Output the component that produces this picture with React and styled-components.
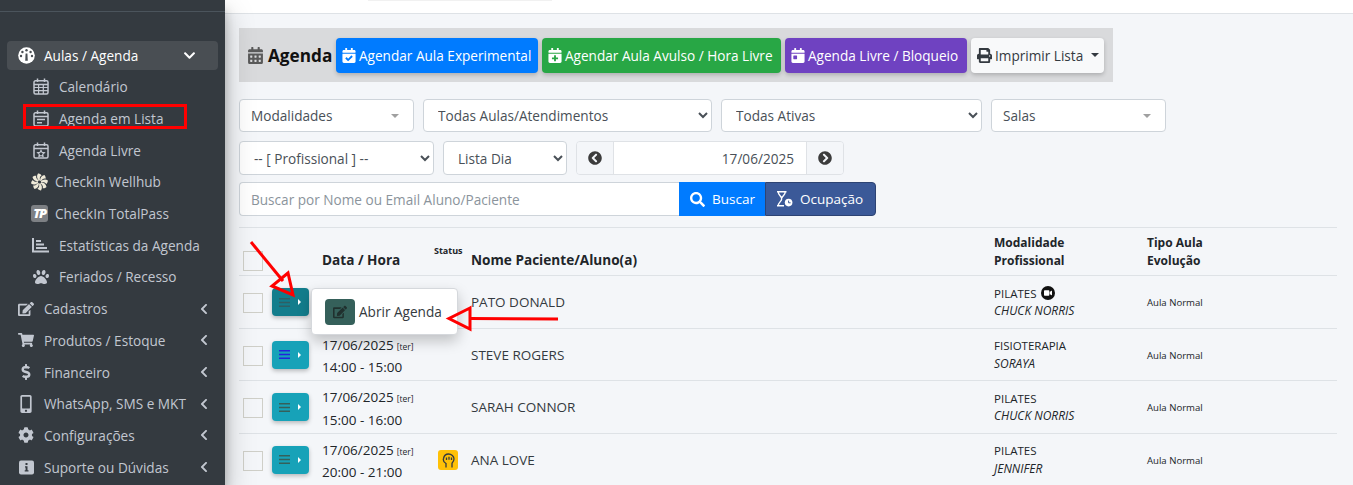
import React from "react";
import styled, { createGlobalStyle } from "styled-components";
import {
  FaChevronDown, FaChevronLeft, FaPaw, FaEdit, FaShoppingCart, FaDollarSign,
  FaMobileAlt, FaCog, FaCalendarAlt, FaCalendarCheck, FaCalendarPlus, FaCalendarDay, FaPrint, FaSearch,
  FaChevronCircleLeft, FaChevronCircleRight, FaVideo,
} from "react-icons/fa";

const Global = createGlobalStyle`
  * { box-sizing: border-box; }
  html, body { margin: 0; height: 100%; overflow: hidden; }
  body { font-family: "Open Sans", "Noto Sans", sans-serif; font-size: 13.6px; color: #212529; background: #f4f6f9; }
  #root { height: 100%; }
`;

const Page = styled.div`display: flex; height: 485px; width: 1353px; position: relative; overflow: hidden;`;

const Sidebar = styled.aside`
  width: 225px; flex: none; background: #343a40; color: #c2c7d0; position: relative; z-index: 2;
  box-shadow: 0 14px 28px rgba(0,0,0,.25), 0 10px 10px rgba(0,0,0,.22);
`;
const Brand = styled.div`height: 12px; border-bottom: 1px solid #4b545c;`;
const Menu = styled.nav`padding-top: 29px; display: flex; flex-direction: column;`;
const Active = styled.div`
  display: flex; align-items: center; height: 29px; width: 211px; margin: 0 7px 1px; padding-left: 10px;
  background: #494e53; border-radius: 4px; color: #fff;
`;
const TopItem = styled.div`display: flex; align-items: center; height: 31.7px; padding-left: 17px;`;
const SubItem = styled.div`display: flex; align-items: center; height: 31.7px; padding-left: ${p => p.$tight ? 31 : 32}px;`;
const TopIcon = styled.span`width: 18px; margin-right: 9px; display: flex; justify-content: center; font-size: 16px; color: #c2c7d0;`;
const ActiveIcon = styled(TopIcon)`color: #fff;`;
const SubIcon = styled.span`width: 17px; margin-right: ${p => p.$tight ? 7 : 10}px; display: flex; justify-content: center; font-size: 16px; color: #c2c7d0;`;
const Chevron = styled.span`margin-left: auto; margin-right: ${p => p.$m}px; display: flex; font-size: ${p => p.$s}px;`;
const TpLogo = styled.span`
  width: 17px; height: 17px; border-radius: 3px; background: #7d8084; color: #fff; font: italic 800 13px/17px "Open Sans", sans-serif;
  letter-spacing: -1.5px; text-align: center;
`;

const Main = styled.main`flex: 1; min-width: 0; display: flex; flex-direction: column;`;
const Header = styled.header`height: 14px; flex: none; background: #fff; border-bottom: 1px solid #dee2e6;`;
const HeaderTab = styled.div`width: 184px; height: 1px; margin-left: 143px; background: #f1f1f1;`;
const Content = styled.div`padding: 14px 16px 0 14px;`;

const Toolbar = styled.div`
  display: flex; align-items: center; gap: 4px; width: 874px; height: 54px; padding-left: 8px; background: #d9dadc;
`;
const Title = styled.h1`
  margin: 0; display: flex; align-items: center; gap: 4px; font-size: 17.2px; font-weight: 700; color: #111; width: 85px; white-space: nowrap;
  svg { color: #5a5a5a; font-size: 17px; flex: none; }
`;
const ActionButton = styled.button`
  height: 35px; width: ${p => p.$w}px; padding: 0 0 0 6px; border: 0; border-radius: 4px; background: ${p => p.$bg}; color: ${p => p.$fg || "#fff"};
  display: flex; align-items: center; gap: 3px; font: inherit; font-size: 13.6px; white-space: nowrap;
  box-shadow: 0 2px 4px rgba(0,0,0,.2);
  svg { font-size: 15px; width: 14px; flex: none; }
`;
const PrintButton = styled(ActionButton)`
  svg { width: 15px; }
`;
const Caret = styled.span`
  width: 0; height: 0; border-left: 4px solid transparent; border-right: 4px solid transparent; border-top: 4px solid ${p => p.$c || "#343a40"};
  margin-left: ${p => p.$ml || 0}px;
`;

const Row = styled.div`display: flex; gap: 9px; margin-top: ${p => p.$mt}px;`;
const Field = styled.select`
  width: ${p => p.$w}px; height: ${p => p.$h || 33}px; padding: 0 0 0 10px; background: #fff; border: 1px solid #ced4da; border-radius: 4px;
  font: inherit; font-size: 13.6px; color: #495057;
`;
const Select2 = styled.div`
  width: ${p => p.$w}px; height: 33px; padding: 0 14px 0 11px; background: #fff; border: 1px solid #ced4da; border-radius: 4px;
  display: flex; align-items: center; justify-content: space-between; color: #495057; font-size: 13.6px;
`;
const DateGroup = styled.div`display: flex; width: 268px; height: 34px; border: 1px solid #dfe2e6; border-radius: 4px; overflow: hidden;`;
const DateAddon = styled.span`width: 36px; flex: none; background: #f4f6f9; display: flex; align-items: center; justify-content: center; color: #3c3c3c; font-size: 14px;`;
const DateValue = styled.div`
  flex: 1; background: #fff; border-left: 1px solid #dfe2e6; border-right: 1px solid #dfe2e6; display: flex; align-items: center; justify-content: flex-end;
  padding-right: 12px; color: #495057; font-size: 13.6px;
`;
const SearchBar = styled.div`display: flex; margin-top: 7px; height: 34px; width: 637px;`;
const SearchInput = styled.input`
  width: 440px; height: 34px; padding: 0 11px; border: 1px solid #ced4da; border-right: 0; border-radius: 4px 0 0 4px; background: #fff; font: inherit; font-size: 13.6px;
  &::placeholder { color: #8b949c; opacity: 1; }
`;
const SearchButton = styled.button`
  width: ${p => p.$w}px; height: 34px; padding: 0 0 0 10px; border: 1px solid ${p => p.$b}; background: ${p => p.$bg}; color: #fff; font: inherit; font-size: 13.5px;
  display: flex; align-items: center; gap: 7px; border-radius: ${p => p.$r || 0};
  svg { font-size: 15px; flex: none; }
`;

const Table = styled.div`margin-top: 11px; width: 1098px; border-top: 1px solid #dee2e6;`;
const columns = "29px 50px 112px 37px 523px 153px 1fr";
const HeadRow = styled.div`
  display: grid; grid-template-columns: ${columns}; padding-left: 4px; height: 48px; border-bottom: 1px solid #dee2e6; font-weight: 700; color: #212529;
`;
const HeadCell = styled.div`align-self: end; padding-bottom: ${p => p.$pb ?? 6}px; line-height: 18px; font-size: ${p => p.$fs || 13.6}px;`;
const StatusHead = styled.div`font-size: 9px; font-weight: 700; margin-top: 17px; white-space: nowrap; line-height: 12px;`;
const DataRow = styled.div`
  display: grid; grid-template-columns: ${columns}; padding-left: 4px; height: ${p => p.$h}px; align-items: center; border-bottom: 1px solid #dee2e6;
`;
const Check = styled.span`display: block; width: 20px; height: 20px; margin-top: 2px; border: 1px solid #cfcfc8; background: #f4f6f9;`;
const HeadCheck = styled(Check)`align-self: end; margin-bottom: 4px;`;
const MenuButton = styled.div`
  width: 37px; height: 28px; border-radius: 4px; background: ${p => p.$bg || "#17a2b8"}; display: flex; align-items: center; padding-left: 7px; gap: 8px;
  box-shadow: 0 2px 4px rgba(0,0,0,.25);
`;
const Arrow = styled.span`width: 0; height: 0; border-top: 3px solid transparent; border-bottom: 3px solid transparent; border-left: 3px solid #fff;`;
const DateCell = styled.div`line-height: 20.5px; padding-top: 3px; font-size: 13.5px; white-space: nowrap;`;
const Weekday = styled.span`font-size: 8.5px; margin-left: 3px;`;
const Status = styled.span`width: 20px; height: 20px; margin: 1px 0 0 4px; border-radius: 3px; background: #ffc107; color: #343a40; display: flex; align-items: center; justify-content: center;`;
const Name = styled.div`font-size: 13.5px; color: #343a40;`;
const ModCell = styled.div`font-size: 11.5px; line-height: 17.5px; color: #212529;`;
const ModLine = styled.div`display: flex; align-items: center; gap: 5px;`;
const Prof = styled.div`font-style: italic; font-size: 12px;`;
const ZoomIcon = styled.span`width: 14px; height: 14px; border-radius: 50%; background: #111; color: #fff; display: flex; align-items: center; justify-content: center; font-size: 8px;`;
const Kind = styled.div`font-size: 9.6px; padding-top: 1px;`;

const Popup = styled.div`
  position: absolute; left: 311px; top: 288px; width: 147px; height: 47px; z-index: 3; background: #fff; border: 1px solid #d5d8dc; border-radius: 4px;
  box-shadow: 0 6px 14px rgba(0,0,0,.22); display: flex; align-items: center; padding-left: 13px; gap: 4px; font-size: 13.6px; color: #343a40;
`;
const PopupIcon = styled.span`width: 30px; height: 26px; margin-top: 1px; border-radius: 4px; background: #35605a; color: #20302e; display: flex; align-items: center; justify-content: center; font-size: 14px;`;
const RedBox = styled.div`position: absolute; left: 23px; top: 104px; width: 164px; height: 25px; z-index: 4; border: 3px solid #f00;`;
const Annot = styled.svg`position: absolute; inset: 0; z-index: 4; pointer-events: none;`;

const Bars = ({ color }) => (
  <svg width="11" height="11" viewBox="0 0 11 11"><path d="M0 1h11v1.4H0zM0 4.8h11v1.4H0zM0 8.6h11V10H0z" fill={color} /></svg>
);
const CalOutline = ({ kind }) => (
  <svg width="16" height="17" viewBox="0 0 16 17" fill="none" stroke="currentColor" strokeWidth="1.5">
    <rect x="1" y="2.8" width="14" height="13.2" rx="1.5" />
    <path d="M4.5 .5v3.5M11.5 .5v3.5M1 6.5h14" />
    {kind === "grid" && <path d="M1 9.5h14M1 12.7h14M5.6 6.5V16M10.3 6.5V16" strokeWidth="1.2" />}
    {kind === "list" && <path d="M4 9.5h8M4 12.7h5" />}
    {kind === "star" && <path d="M8 8.3l1.1 2.1 2.3.3-1.7 1.6.4 2.3L8 13.5l-2.1 1.1.4-2.3-1.7-1.6 2.3-.3z" strokeWidth="1.1" />}
  </svg>
);
const Gauge = () => (
  <svg width="17" height="17" viewBox="0 0 17 17">
    <circle cx="8.5" cy="8.5" r="8.3" fill="#fff" />
    <circle cx="8.5" cy="3.2" r="1.2" fill="#494e53" />
    <circle cx="4.4" cy="5" r="1.2" fill="#494e53" />
    <circle cx="12.6" cy="5" r="1.2" fill="#494e53" />
    <circle cx="3" cy="9" r="1.2" fill="#494e53" />
    <circle cx="14" cy="9" r="1.2" fill="#494e53" />
    <path d="M7.6 6.5h1.8l.4 7.2H7.2z" fill="#494e53" />
  </svg>
);
const Pinwheel = () => (
  <svg width="18" height="18" viewBox="-9 -9 18 18" fill="#eee9d8">
    {[0, 45, 90, 135, 180, 225, 270, 315].map(a => (
      <path key={a} transform={`rotate(${a})`} d="M-.7 -1.6C-2.6 -3.4 -3.4 -6.4 -1.6 -8.9 -.2 -8.9 1.4 -8.2 2.2 -7 .4 -6.4 -.2 -3.8 .7 -1.6z" />
    ))}
    <circle r="1" fill="#343a40" />
  </svg>
);
const AxisBars = () => (
  <svg width="17" height="15" viewBox="0 0 17 15" fill="none" stroke="#c2c7d0">
    <path d="M1 0v13.5h16" strokeWidth="2" />
    <path d="M4 3h5M4 6.5h8M4 10h11" strokeWidth="2" />
  </svg>
);
const Fist = () => (
  <svg width="13" height="15" viewBox="0 0 13 15" fill="none" stroke="#343a40" strokeWidth="1.3">
    <path d="M4 14.5V10.5C2 9.5 1 7.5 1.5 5.5 2 3 4 1 6.5 1 9.5 1 12 3.2 12 6 12 7.8 10.8 9.3 10 10.2V14.5" />
    <path d="M4.5 4.5v2.5M7 3.8v3M9.5 4.5v2.5" />
  </svg>
);
const InfoSquare = () => (
  <svg width="15" height="15" viewBox="0 0 15 15"><rect width="15" height="14" y=".5" rx="2" fill="currentColor" /><path d="M6.5 3h2v2h-2zM6 6.2h2.5v4H9.5v1.3H5.7v-1.3h.9V7.5H6z" fill="#343a40" /></svg>
);
const HourClock = () => (
  <svg width="17" height="16" viewBox="0 0 17 16" fill="none" stroke="#fff" strokeWidth="1.4">
    <path d="M1 .8h9.5M1 14.8h7M2.2 .8c0 3.5 3.5 4.2 3.5 7s-3.5 3.5-3.5 7M9.3 .8c0 3-2.7 4-3.4 6" />
    <circle cx="12.6" cy="11.6" r="3.8" fill="#fff" stroke="none" />
    <path d="M12.6 9.6v2.2h2" stroke="#3b5998" strokeWidth="1" />
  </svg>
);

const tops = [
  ["Cadastros", <FaEdit />], ["Produtos / Estoque", <FaShoppingCart />], ["Financeiro", <FaDollarSign />],
  ["WhatsApp, SMS e MKT", <FaMobileAlt style={{ fontSize: 18 }} />], ["Configurações", <FaCog />], ["Suporte ou Dúvidas", <InfoSquare />],
];
const rows = [
  { h: 53, date: "17/06/2025", time: "\u00a0", name: "PATO DONALD", mod: "PILATES", prof: "CHUCK NORRIS", zoom: true, bg: "#137d8c", bar: "#2f5f63" },
  { h: 52, date: "17/06/2025", time: "14:00 - 15:00", name: "STEVE ROGERS", mod: "FISIOTERAPIA", prof: "SORAYA", bar: "#2222dd" },
  { h: 53, date: "17/06/2025", time: "15:00 - 16:00", name: "SARAH CONNOR", mod: "PILATES", prof: "CHUCK NORRIS", bar: "#35605a" },
  { h: 52, date: "17/06/2025", time: "20:00 - 21:00", name: "ANA LOVE", mod: "PILATES", prof: "JENNIFER", status: true, bar: "#35605a" },
];

export default function App() {
  return (
    <Page>
      <Global />
      <Sidebar>
        <Brand />
        <Menu>
          <Active>
            <ActiveIcon><Gauge /></ActiveIcon>Aulas / Agenda
            <Chevron $m={22} $s={13}><FaChevronDown /></Chevron>
          </Active>
          <SubItem><SubIcon><CalOutline kind="grid" /></SubIcon>Calendário</SubItem>
          <SubItem><SubIcon><CalOutline kind="list" /></SubIcon>Agenda em Lista</SubItem>
          <SubItem><SubIcon><CalOutline kind="star" /></SubIcon>Agenda Livre</SubItem>
          <SubItem $tight><SubIcon $tight><Pinwheel /></SubIcon>CheckIn Wellhub</SubItem>
          <SubItem $tight><SubIcon $tight><TpLogo>TP</TpLogo></SubIcon>CheckIn TotalPass</SubItem>
          <SubItem><SubIcon><AxisBars /></SubIcon>Estatísticas da Agenda</SubItem>
          <SubItem><SubIcon><FaPaw /></SubIcon>Feriados / Recesso</SubItem>
          {tops.map(([label, icon]) => (
            <TopItem key={label}>
              <TopIcon>{icon}</TopIcon>{label}
              <Chevron $m={15} $s={12}><FaChevronLeft /></Chevron>
            </TopItem>
          ))}
        </Menu>
      </Sidebar>
      <Main>
        <Header><HeaderTab /></Header>
        <Content>
          <Toolbar>
            <Title><FaCalendarAlt />Agenda</Title>
            <ActionButton $w={202} $bg="#007bff"><FaCalendarCheck />Agendar Aula Experimental</ActionButton>
            <ActionButton $w={239} $bg="#28a745"><FaCalendarPlus />Agendar Aula Avulso / Hora Livre</ActionButton>
            <ActionButton $w={182} $bg="#6f42c1"><FaCalendarDay />Agenda Livre / Bloqueio</ActionButton>
            <PrintButton $w={133} $bg="#f8f9fa" $fg="#343a40"><FaPrint />Imprimir Lista<Caret $ml={5} /></PrintButton>
          </Toolbar>
          <Row $mt={17}>
            <Select2 $w={175}>Modalidades<Caret $c="#a0a0a0" /></Select2>
            <Field $w={289} defaultValue="a"><option value="a">Todas Aulas/Atendimentos</option></Field>
            <Field $w={261} defaultValue="a"><option value="a">Todas Ativas</option></Field>
            <Select2 $w={175}>Salas<Caret $c="#a0a0a0" /></Select2>
          </Row>
          <Row $mt={9}>
            <Field $w={195} $h={34} defaultValue="a"><option value="a">-- [ Profissional ] --</option></Field>
            <Field $w={124} $h={34} defaultValue="a"><option value="a">Lista Dia</option></Field>
            <DateGroup>
              <DateAddon><FaChevronCircleLeft /></DateAddon>
              <DateValue>17/06/2025</DateValue>
              <DateAddon><FaChevronCircleRight /></DateAddon>
            </DateGroup>
          </Row>
          <SearchBar>
            <SearchInput placeholder="Buscar por Nome ou Email Aluno/Paciente" />
            <SearchButton $w={86} $bg="#007bff" $b="#007bff"><FaSearch />Buscar</SearchButton>
            <SearchButton $w={111} $bg="#3b5998" $b="#2d4373" $r="0 4px 4px 0"><HourClock />Ocupação</SearchButton>
          </SearchBar>
          <Table>
            <HeadRow>
              <HeadCheck />
              <span />
              <HeadCell>Data / Hora</HeadCell>
              <StatusHead>Status</StatusHead>
              <HeadCell>Nome Paciente/Aluno(a)</HeadCell>
              <HeadCell $fs={12} $pb={5}>Modalidade<br />Profissional</HeadCell>
              <HeadCell $fs={12} $pb={5}>Tipo Aula<br />Evolução</HeadCell>
            </HeadRow>
            {rows.map(r => (
              <DataRow key={r.name} $h={r.h}>
                <Check />
                <MenuButton $bg={r.bg}><Bars color={r.bar} /><Arrow /></MenuButton>
                <DateCell>{r.date}<Weekday>[ter]</Weekday><br />{r.time}</DateCell>
                <div>{r.status && <Status><Fist /></Status>}</div>
                <Name>{r.name}</Name>
                <ModCell>
                  <ModLine>{r.mod}{r.zoom && <ZoomIcon><FaVideo /></ZoomIcon>}</ModLine>
                  <Prof>{r.prof}</Prof>
                </ModCell>
                <Kind>Aula Normal</Kind>
              </DataRow>
            ))}
          </Table>
        </Content>
      </Main>
      <Popup><PopupIcon><FaEdit /></PopupIcon>Abrir Agenda</Popup>
      <RedBox />
      <Annot width="1353" height="485" viewBox="0 0 1353 485" fill="none" stroke="#f00" strokeWidth="3">
        <path d="M251 242L283 281" />
        <path d="M288 273L272 286L293 295Z" />
        <path d="M558 319L470 318.5" />
        <path d="M470 308L449 318.5L470 329Z" />
      </Annot>
    </Page>
  );
}
